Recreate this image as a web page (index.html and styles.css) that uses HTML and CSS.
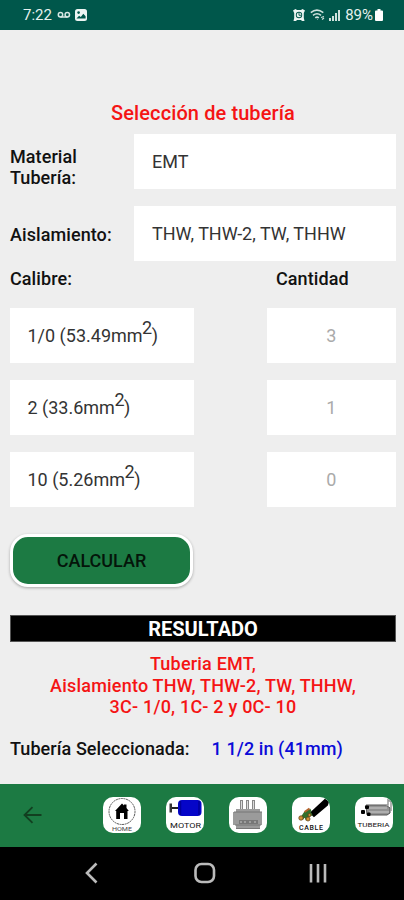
FILE: index.html
```html
<!doctype html>
<html lang="es">
  <head>
    <meta charset="UTF-8" />
    <meta name="viewport" content="width=device-width, initial-scale=1.0" />
    <title>Selección de tubería</title>
    <link rel="stylesheet" href="styles.css">
  </head>
  <body>
    <div class="status-bar">
      <span class="clock">7:22</span>
      <svg class="voicemail" width="14" height="8" viewBox="0 0 14 8" fill="none" stroke="#d8e8e4" stroke-width="1.5">
        <circle cx="3.5" cy="3.8" r="2.2" />
        <circle cx="10.3" cy="3.8" r="2.2" />
        <path d="M3.5 6h7" />
      </svg>
      <svg class="gallery" width="12" height="12" viewBox="0 0 12 12">
        <rect width="12" height="12" rx="2.5" fill="#edf5f3" />
        <circle cx="3.6" cy="3.6" r="1.3" fill="#00574b" />
        <path d="M1.5 9.5l2.6-2.7 1.7 1.3 2.5-3.3 2.3 2.5v2.2z" fill="#00574b" />
      </svg>
      <div class="status-right">
        <svg width="12" height="12" viewBox="0 0 12 12">
          <path d="M0 1.500L2.500 0l1.500 1h4l1.500-1L12 1.500 10.800 4v5l.7 3H9L8 11H4l-1 1H.500l.7-3V4z" fill="#edf5f3" />
          <circle cx="6" cy="6" r="3.200" fill="#00574b" />
          <circle cx="6" cy="6" r="2.300" fill="#edf5f3" />
          <path d="M6 4V6.300h2" fill="none" stroke="#00574b" stroke-width=".9" />
        </svg>
        <svg class="wifi" width="16" height="12" viewBox="0 0 16 12" fill="none" stroke="#cfe2dd" stroke-width="1.600">
          <path d="M.800 3.600q6-5 12.500 0M3 6.300q4-3.200 8 0M5.300 8.800q1.700-1.400 3.500 0" />
          <path d="M7 10.500h.500M11 8.500l3-1M12 10.500l2-1.500" stroke-width="1.200" />
        </svg>
        <svg class="signal" width="11" height="12" viewBox="0 0 11 12" fill="#cfe2dd">
          <path d="M0 9h2v3H0zM3 7h2v5H3zM6 4h2v8H6zM9 1h2v11H9z" />
        </svg>
        <span class="battery-text">89%</span>
        <svg width="8" height="12" viewBox="0 0 8 12" fill="#fff">
          <path d="M2.500 0h3v1.500H7q1 0 1 1V11q0 1-1 1H1q-1 0-1-1V2.500q0-1 1-1h1.500z" />
        </svg>
      </div>
    </div>

    <main class="content">
      <h1>Selección de tubería</h1>

      <div class="field">
        <label>Material<br>Tubería:</label>
        <div class="input">EMT</div>
      </div>
      <div class="field">
        <label>Aislamiento:</label>
        <div class="input">THW, THW-2, TW, THHW</div>
      </div>

      <div class="columns-header">
        <span>Calibre:</span>
        <span class="center">Cantidad</span>
      </div>
      <div class="cables">
        <div class="input">1/0 (53.49mm<sup>2</sup>)</div>
        <div class="input quantity">3</div>
        <div class="input">2 (33.6mm<sup>2</sup>)</div>
        <div class="input quantity">1</div>
        <div class="input">10 (5.26mm<sup>2</sup>)</div>
        <div class="input quantity">0</div>
      </div>

      <button class="calc-btn">CALCULAR</button>

      <h2>RESULTADO</h2>
      <p class="summary">
        Tuberia EMT,<br>
        Aislamiento THW, THW-2, TW, THHW,<br>
        3C- 1/0, 1C- 2 y 0C- 10
      </p>
      <div class="selected">
        <span>Tubería Seleccionada:</span>
        <span class="size">1 1/2 in (41mm)</span>
      </div>
    </main>

    <nav class="toolbar">
      <svg class="back" width="19" height="18" viewBox="0 0 19 18" fill="none" stroke="#123f20" stroke-width="1.800">
        <path d="M18.500 9H1.500M9.500 1.200L1.500 9l8 7.800" />
      </svg>
      <div class="shortcuts">
        <svg class="tile" viewBox="0 0 38 36">
          <circle cx="19" cy="14.500" r="13" fill="none" stroke="#555" stroke-width="1" stroke-dasharray="2 .6" />
          <path d="M12 14l7-7.500 2 2V7.500h2.500V11l2.300 3h-1.300v8H21v-6h-4v6h-3.800v-8z" fill="#000" />
          <text x="19" y="33.500" text-anchor="middle" textLength="20" lengthAdjust="spacingAndGlyphs" font-size="6" fill="#444">HOME</text>
        </svg>
        <svg class="tile" viewBox="0 0 38 36">
          <path d="M4.500 11H13" stroke="#222" stroke-width="2" fill="none" />
          <rect x="3.500" y="6.500" width="2.500" height="9" fill="#333" />
          <rect x="12" y="3" width="23.500" height="16" rx="4" fill="#0505c8" />
          <path d="M14.500 4v14M33 4v14" stroke="#00009a" stroke-width="1.500" />
          <text x="19.500" y="30.500" text-anchor="middle" textLength="31" lengthAdjust="spacingAndGlyphs" font-size="7" fill="#111">MOTOR</text>
        </svg>
        <svg class="tile" viewBox="0 0 38 36">
          <g fill="#ddd" stroke="#888" stroke-width="1">
            <rect x="11.500" y="3.500" width="2" height="9" />
            <rect x="17.500" y="3.500" width="2" height="9" />
            <rect x="23.500" y="3.500" width="2" height="9" />
          </g>
          <path d="M7 12h24v3h2v13h-2v4H7v-4H4V15h3z" fill="#9b9b9b" />
          <path d="M5 15h28M6 28h26M7 31.500h24" stroke="#777" stroke-width="1" />
          <path d="M10 23h19v4H10z" fill="#777" />
          <path d="M12 24v2M16 24v2M21 24v2M26 24v2" stroke="#aaa" stroke-width="1.500" />
        </svg>
        <svg class="tile" viewBox="0 0 38 36">
          <path d="M19 16L33 3l3 2-1 3-13 11z" fill="#000" stroke="#000" stroke-width="2" />
          <path d="M19 13l-6 3-4 6M20 17l-6 3 1 3M19 16l-6 2-3 4" stroke="#34702b" stroke-width="2.600" fill="none" />
          <path d="M17.500 11.500l-5 3.500" stroke="#b5622b" stroke-width="2" />
          <g fill="#d29135" stroke="#65451b" stroke-width=".8">
            <circle cx="9" cy="21" r="2.200" />
            <circle cx="16" cy="22" r="2" />
            <circle cx="17.500" cy="18" r="1.500" />
          </g>
          <text x="19" y="32.500" text-anchor="middle" textLength="24" font-size="7" font-weight="500" fill="#111">CABLE</text>
        </svg>
        <svg class="tile" viewBox="0 0 38 36">
          <path d="M11 8h20l4 3v5l-3 2H12z" fill="#929292" stroke="#555" stroke-width="1" />
          <path d="M12 11h20M14 15h20" stroke="#b8b8b8" stroke-width="1.500" />
          <path d="M31 8h2V3l3 2v9" fill="none" stroke="#999" stroke-width="1.500" />
          <g fill="#000">
            <rect x="10" y="8.500" width="4" height="3.500" rx="1" />
            <rect x="6" y="13" width="4" height="4" rx="1" />
            <rect x="12" y="15.500" width="3.500" height="3.500" rx="1" />
          </g>
          <text x="18.500" y="30" text-anchor="middle" textLength="32" lengthAdjust="spacingAndGlyphs" font-size="6" fill="#111">TUBERIA</text>
        </svg>
      </div>
    </nav>

    <div class="system-nav">
      <svg viewBox="0 0 22 22"><path d="M16.500 1.500L7 11l9.500 9.500" /></svg>
      <svg viewBox="0 0 22 22"><rect x="1.500" y="2" width="18.500" height="18" rx="6" /></svg>
      <svg viewBox="0 0 22 22"><path d="M4 2v18.500M11 2v18.500M18 2v18.500" /></svg>
    </div>
  </body>
</html>
```
FILE: styles.css
```css
* {
  box-sizing: border-box;
}

body {
  font-family: Roboto, sans-serif;
  margin: 0;
  height: 900px;
  background: #eee;
  color: #111;
  display: flex;
  flex-direction: column;
  overflow: hidden;
}

.status-bar {
  height: 30px;
  padding: 0 21px 0 23px;
  background: #00574b;
  color: #e6f1ee;
  font-size: 15px;
  display: flex;
  align-items: center;
}

.voicemail {
  margin-left: 5px;
}

.gallery {
  margin-left: 4px;
}

.status-right {
  margin-left: auto;
  display: flex;
  align-items: center;
}

.wifi {
  margin-left: 5px;
}

.signal {
  margin: 0 5px 0 3px;
}

.battery-text {
  margin-right: 2px;
  font-size: 15px;
}

.content {
  flex: 1;
  padding: 70px 8px 0 10px;
}

h1 {
  margin: 0 0 8px;
  height: 26px;
  font-size: 20px;
  line-height: 26px;
  font-weight: 500;
  letter-spacing: 0.1px;
  text-align: center;
  color: #f51414;
}

.field {
  display: grid;
  grid-template-columns: 124px 1fr;
  align-items: center;
  margin-bottom: 17px;
}

.field label,
.columns-header,
.selected {
  font-size: 18px;
  line-height: 21px;
  font-weight: 500;
  letter-spacing: 0.08px;
}

.field label {
  padding-top: 12px;
  align-self: start;
}

.field + .field label {
  padding-top: 18px;
}

.input {
  height: 55px;
  padding: 0 18px;
  background: #fff;
  color: #333;
  font-size: 18px;
  line-height: 55px;
  white-space: nowrap;
}

.columns-header,
.cables {
  display: grid;
  grid-template-columns: 184px 129px;
  justify-content: space-between;
}

.columns-header {
  margin-top: -10px;
}

.center {
  padding-left: 9px;
}

.cables {
  margin-top: 19px;
  row-gap: 17px;
}

.cables .input {
  padding-left: 17.5px;
}

.cables sup {
  margin: 0 -0.5px;
  font-size: 18px;
  line-height: 0;
  vertical-align: 8px;
}

.quantity {
  color: #aaa;
  text-align: center;
}

.calc-btn {
  display: block;
  width: 183px;
  height: 53px;
  margin: 27px 0 28px;
  padding: 0;
  background: #1c7a43;
  border: 3px solid #fff;
  border-radius: 18px;
  box-shadow: 0 1px 3px rgba(0, 0, 0, 0.3);
  color: #04150a;
  font: 500 18px Roboto, sans-serif;
}

h2 {
  margin: 0;
  height: 27px;
  background: #000;
  border: 1px solid #555;
  color: #fff;
  font-size: 20px;
  line-height: 27px;
  font-weight: 700;
  text-align: center;
}

.summary {
  margin: 11px 0 20px;
  color: #f51414;
  font-size: 18px;
  line-height: 21.5px;
  font-weight: 500;
  letter-spacing: 0.2px;
  text-align: center;
}

.selected {
  display: flex;
}

.size {
  margin-left: 22px;
  color: #0b0bd8;
}

.toolbar {
  height: 63px;
  padding: 0 11px 2px 23px;
  background: #1c7a43;
  display: flex;
  align-items: center;
  justify-content: space-between;
}

.shortcuts {
  display: flex;
  gap: 25px;
}

.tile {
  width: 38px;
  height: 36px;
  background: #fff;
  border-radius: 10px;
}

.system-nav {
  height: 53px;
  padding: 0 75px 1px 80px;
  background: #000;
  display: flex;
  align-items: center;
  justify-content: space-between;
}

.system-nav svg {
  width: 22px;
  height: 22px;
  fill: none;
  stroke: #bbb;
  stroke-width: 2.6;
}
```
